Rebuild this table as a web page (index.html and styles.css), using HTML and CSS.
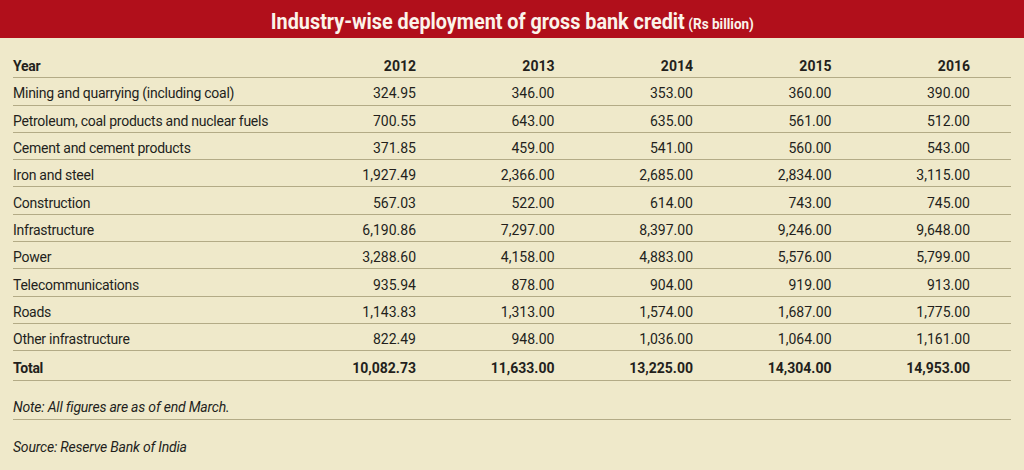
FILE: index.html
```html
<!DOCTYPE html>
<html>
<head>
<meta charset="utf-8">
<link rel="stylesheet" href="styles.css">
</head>
<body>
<div class="page">
  <div class="titlebar"><div class="titletext"><span class="title">Industry-wise deployment of gross bank credit</span> <span class="unit">(Rs billion)</span></div></div>
  <div class="table">
    <div class="row head"><div class="label">Year</div><div class="num">2012</div><div class="num">2013</div><div class="num">2014</div><div class="num">2015</div><div class="num">2016</div></div>
    <div class="row"><div class="label">Mining and quarrying (including coal)</div><div class="num">324.95</div><div class="num">346.00</div><div class="num">353.00</div><div class="num">360.00</div><div class="num">390.00</div></div>
    <div class="row"><div class="label">Petroleum, coal products and nuclear fuels</div><div class="num">700.55</div><div class="num">643.00</div><div class="num">635.00</div><div class="num">561.00</div><div class="num">512.00</div></div>
    <div class="row"><div class="label">Cement and cement products</div><div class="num">371.85</div><div class="num">459.00</div><div class="num">541.00</div><div class="num">560.00</div><div class="num">543.00</div></div>
    <div class="row"><div class="label">Iron and steel</div><div class="num">1,927.49</div><div class="num">2,366.00</div><div class="num">2,685.00</div><div class="num">2,834.00</div><div class="num">3,115.00</div></div>
    <div class="row"><div class="label">Construction</div><div class="num">567.03</div><div class="num">522.00</div><div class="num">614.00</div><div class="num">743.00</div><div class="num">745.00</div></div>
    <div class="row"><div class="label">Infrastructure</div><div class="num">6,190.86</div><div class="num">7,297.00</div><div class="num">8,397.00</div><div class="num">9,246.00</div><div class="num">9,648.00</div></div>
    <div class="row"><div class="label">Power</div><div class="num">3,288.60</div><div class="num">4,158.00</div><div class="num">4,883.00</div><div class="num">5,576.00</div><div class="num">5,799.00</div></div>
    <div class="row"><div class="label">Telecommunications</div><div class="num">935.94</div><div class="num">878.00</div><div class="num">904.00</div><div class="num">919.00</div><div class="num">913.00</div></div>
    <div class="row"><div class="label">Roads</div><div class="num">1,143.83</div><div class="num">1,313.00</div><div class="num">1,574.00</div><div class="num">1,687.00</div><div class="num">1,775.00</div></div>
    <div class="row"><div class="label">Other infrastructure</div><div class="num">822.49</div><div class="num">948.00</div><div class="num">1,036.00</div><div class="num">1,064.00</div><div class="num">1,161.00</div></div>
    <div class="row total"><div class="label">Total</div><div class="num">10,082.73</div><div class="num">11,633.00</div><div class="num">13,225.00</div><div class="num">14,304.00</div><div class="num">14,953.00</div></div>
    <div class="note">Note: All figures are as of end March.</div>
    <div class="source">Source: Reserve Bank of India</div>
  </div>
</div>
</body>
</html>
```
FILE: styles.css
```css
html, body {
  margin: 0;
  padding: 0;
}
body {
  width: 1024px;
  height: 470px;
  background: #efe9ca;
  font-family: Roboto, "Liberation Sans", sans-serif;
  color: #231f1c;
  overflow: hidden;
}
.titlebar {
  height: 38px;
  background: #b10f1b;
  color: #fbf3ea;
  display: flex;
  justify-content: center;
  align-items: center;
  white-space: nowrap;
}
.titletext {
  transform: scaleX(0.9);
  padding-top: 4px;
}
.title {
  font-family: Roboto, "Liberation Sans", sans-serif;
  font-weight: bold;
  font-size: 22px;
}
.unit {
  font-family: Roboto, "Liberation Sans", sans-serif;
  font-weight: bold;
  font-size: 15px;
}
.table {
  margin: 13px 13px 0 13px;
}
.row {
  display: grid;
  grid-template-columns: 305.5px repeat(5, 1fr);
  height: 27.3px;
  box-sizing: border-box;
  border-bottom: 1px solid #b3ab86;
  align-items: center;
  padding-top: 4px;
  font-size: 14px;
}
.row .label {
  letter-spacing: -0.25px;
}
.row .num {
  text-align: right;
  padding-right: 41px;
}
.head, .total {
  font-weight: bold;
}
.total {
  height: 30px;
}
.note, .source {
  font-style: italic;
  font-size: 14px;
  letter-spacing: -0.2px;
}
.note {
  height: 39px;
  box-sizing: border-box;
  border-bottom: 1px solid #b3ab86;
  padding-top: 18px;
}
.source {
  padding-top: 19px;
}
```
